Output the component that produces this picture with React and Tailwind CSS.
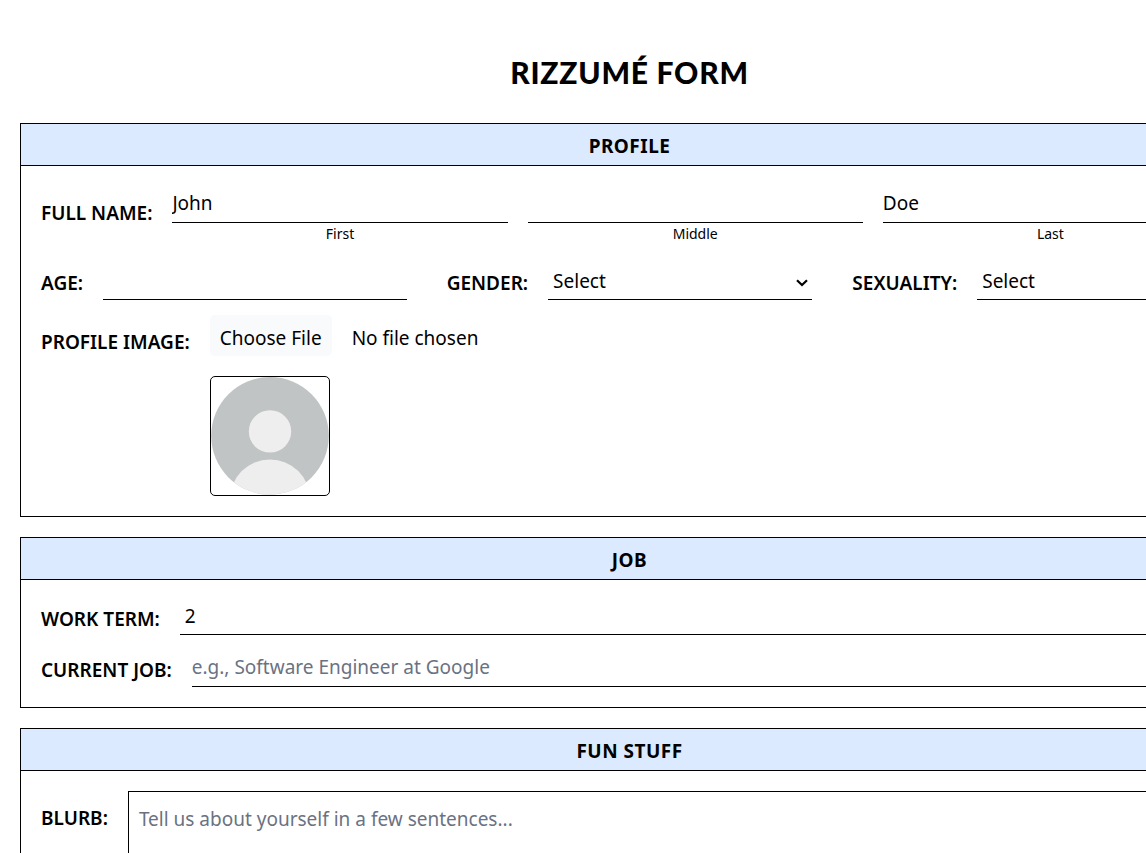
function Section({ title, children }) {
  return (
    <section className="border border-black">
      <h2 className="border-b border-black bg-blue-100 pt-2 pb-1 text-center text-[19px] leading-[29px] font-bold tracking-wide">
        {title}
      </h2>
      <div className="p-5">{children}</div>
    </section>
  );
}

function Label({ htmlFor, children }) {
  return (
    <label htmlFor={htmlFor} className="shrink-0 pt-[3px] text-[19px] leading-7 font-semibold">
      {children}
    </label>
  );
}

function NamePart({ id, caption, defaultValue }) {
  return (
    <div className="flex min-w-0 flex-col">
      <input
        id={id}
        type="text"
        defaultValue={defaultValue}
        className="h-[37px] w-full border-b border-black pb-[3px] outline-none"
      />
      <label htmlFor={id} className="pt-px text-center text-[14px] leading-5">
        {caption}
      </label>
    </div>
  );
}

function Select({ id, options, className }) {
  return (
    <div className="relative min-w-0 flex-1">
      <select
        id={id}
        className={`w-full appearance-none border-b border-black bg-white px-[5px] outline-none ${className}`}
      >
        {options.map((option) => (
          <option key={option}>{option}</option>
        ))}
      </select>
      <svg
        viewBox="0 0 12 8"
        className="pointer-events-none absolute top-4 right-1 h-2 w-3"
        fill="none"
        stroke="currentColor"
        strokeWidth="2.2"
      >
        <path d="M1 1.2 L6 6 L11 1.2" />
      </svg>
    </div>
  );
}

function DefaultAvatar() {
  return (
    <svg viewBox="0 0 118 118" className="size-full" role="img" aria-label="Profile preview">
      <defs>
        <clipPath id="avatar-clip">
          <circle cx="59" cy="58.8" r="58.8" />
        </clipPath>
      </defs>
      <g clipPath="url(#avatar-clip)">
        <rect width="118" height="118" fill="#c0c4c5" />
        <circle cx="59" cy="54.4" r="21.2" fill="#eeeeee" />
        <circle cx="59" cy="122.4" r="40" fill="#eeeeee" />
      </g>
    </svg>
  );
}

export default function App() {
  return (
    <div className="min-h-screen overflow-x-hidden bg-white font-['Noto_Sans',sans-serif] text-[19px] text-black">
      <form className="flex min-w-[1259px] flex-col gap-5 px-5 pb-5">
        <h1 className="pt-[52px] pb-[11px] text-center font-['Lato',sans-serif] text-[30px] leading-10 font-black tracking-wide">
          RIZZUMÉ FORM
        </h1>

        <Section title="PROFILE">
          <div className="flex flex-col gap-[19px]">
            <div className="flex items-start gap-5">
              <div className="flex pt-[10px]">
                <Label htmlFor="first">FULL NAME:</Label>
              </div>
              <div className="grid flex-1 grid-cols-3 gap-5">
                <NamePart id="first" caption="First" defaultValue="John" />
                <NamePart id="middle" caption="Middle" defaultValue="" />
                <NamePart id="last" caption="Last" defaultValue="Doe" />
              </div>
            </div>

            <div className="grid grid-cols-3 gap-10">
              <div className="flex items-center gap-5">
                <Label htmlFor="age">AGE:</Label>
                <input
                  id="age"
                  type="text"
                  className="h-[37px] min-w-0 flex-1 border-b border-black outline-none"
                />
              </div>
              <div className="flex items-center gap-5">
                <Label htmlFor="gender">GENDER:</Label>
                <Select id="gender" options={['Select', 'Male', 'Female', 'Other']} className="h-[37px]" />
              </div>
              <div className="flex items-center gap-5">
                <Label htmlFor="sexuality">SEXUALITY:</Label>
                <Select id="sexuality" options={['Select', 'Straight', 'Gay', 'Bisexual', 'Other']} className="h-[37px]" />
              </div>
            </div>
          </div>

          <div className="mt-[15px] flex items-start gap-5">
            <div className="flex pt-[10px]">
              <Label htmlFor="image">PROFILE IMAGE:</Label>
            </div>
            <div className="flex flex-col gap-5">
              <input
                id="image"
                type="file"
                className="h-[41px] leading-[41px] file:mr-5 file:h-[41px] file:rounded-[5px] file:bg-gray-50 file:px-[10px] file:pt-[3px]"
              />
              <div className="size-[120px] overflow-hidden rounded-[5px] border border-black">
                <DefaultAvatar />
              </div>
            </div>
          </div>
        </Section>

        <Section title="JOB">
          <div className="flex flex-col gap-[15px]">
            <div className="flex items-center gap-5">
              <Label htmlFor="term">WORK TERM:</Label>
              <Select id="term" options={['2', '3', '4', '5', '6']} className="h-[35px] pb-px" />
            </div>
            <div className="flex items-center gap-5">
              <Label htmlFor="job">CURRENT JOB:</Label>
              <input
                id="job"
                type="text"
                placeholder="e.g., Software Engineer at Google"
                className="h-[37px] flex-1 border-b border-black pb-[3px] outline-none placeholder:text-gray-500"
              />
            </div>
          </div>
        </Section>

        <Section title="FUN STUFF">
          <div className="flex items-start gap-5">
            <div className="flex pt-[10px]">
              <Label htmlFor="blurb">BLURB:</Label>
            </div>
            <textarea
              id="blurb"
              rows={4}
              placeholder="Tell us about yourself in a few sentences..."
              className="flex-1 border border-black px-[10px] py-[13px] outline-none placeholder:text-gray-500"
            />
          </div>
        </Section>
      </form>
    </div>
  );
}
